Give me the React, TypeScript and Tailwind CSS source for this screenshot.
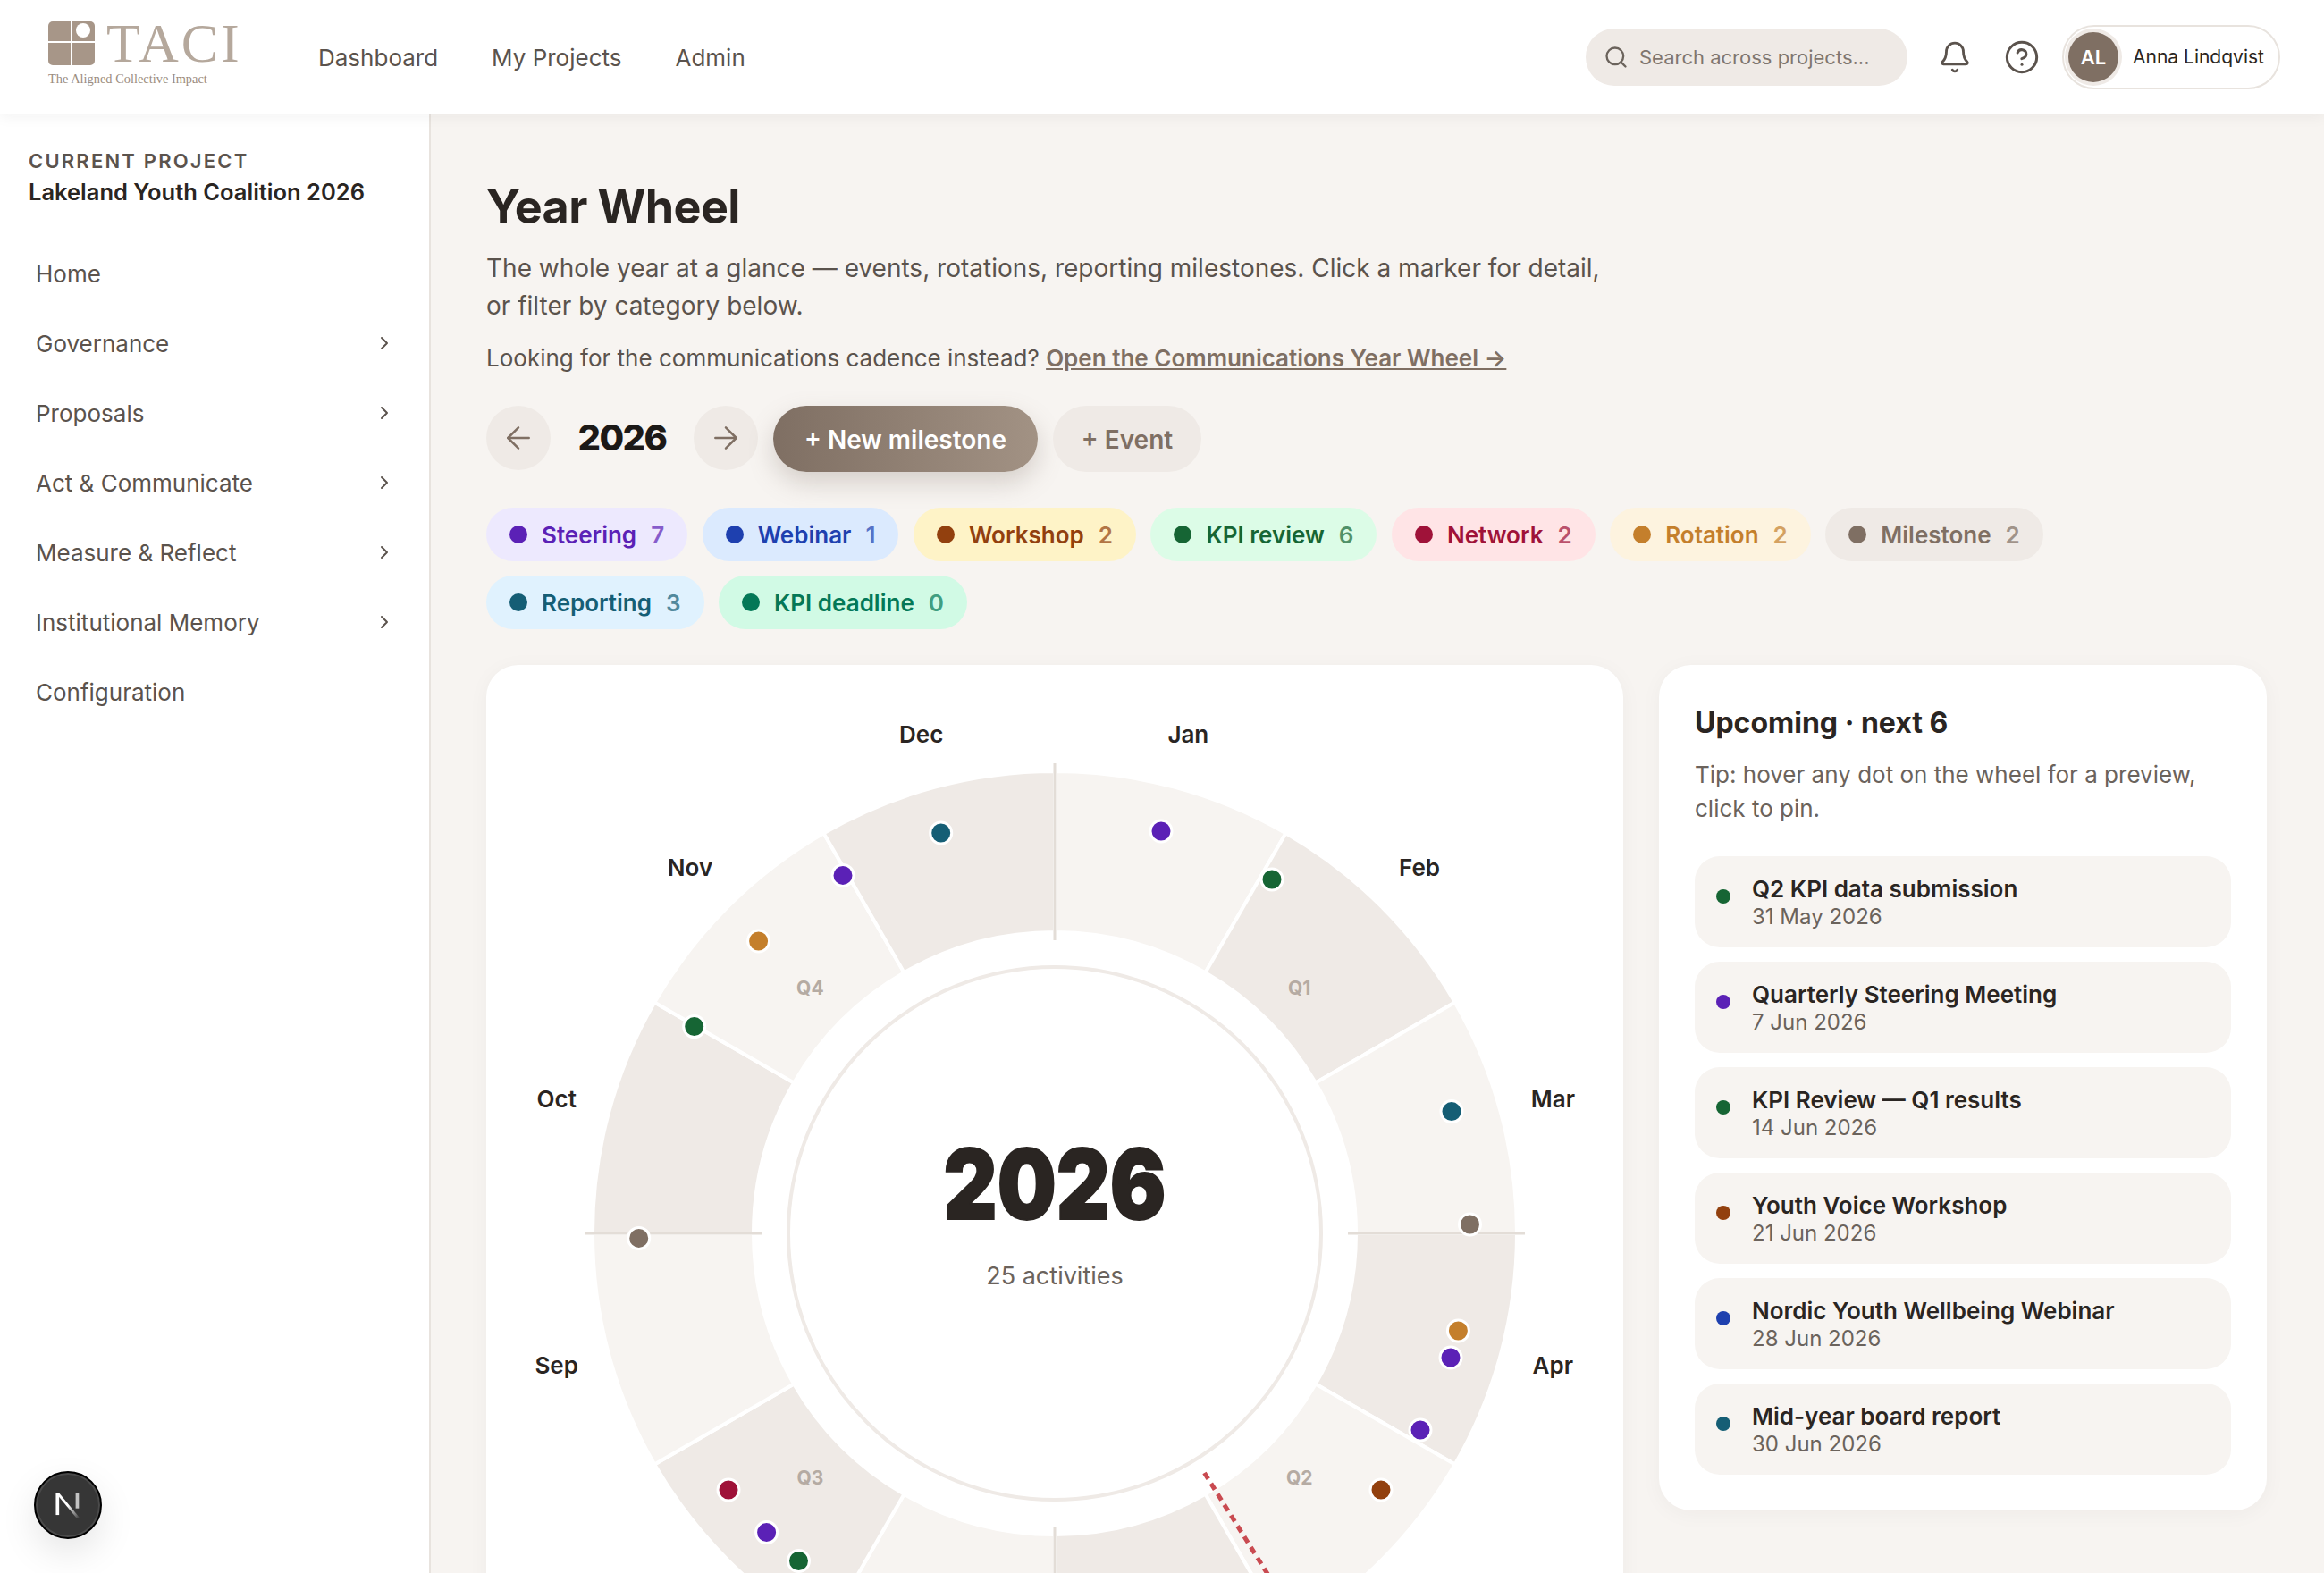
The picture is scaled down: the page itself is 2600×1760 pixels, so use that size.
import { ArrowLeft, ArrowRight, Bell, ChevronRight, CircleHelp, Search } from 'lucide-react'

const navItems = [
  { label: 'Home' },
  { label: 'Governance', more: true },
  { label: 'Proposals', more: true },
  { label: 'Act & Communicate', more: true },
  { label: 'Measure & Reflect', more: true },
  { label: 'Institutional Memory', more: true },
  { label: 'Configuration' },
]

const chips = [
  { label: 'Steering', count: 7, bg: 'bg-[#ede9fe]', text: 'text-[#5b21b6]', dot: 'bg-[#5b21b6]' },
  { label: 'Webinar', count: 1, bg: 'bg-[#dbeafe]', text: 'text-[#1e40af]', dot: 'bg-[#1e40af]' },
  { label: 'Workshop', count: 2, bg: 'bg-[#fef3c7]', text: 'text-[#92400e]', dot: 'bg-[#92400e]' },
  { label: 'KPI review', count: 6, bg: 'bg-[#dcfce7]', text: 'text-[#166534]', dot: 'bg-[#166534]' },
  { label: 'Network', count: 2, bg: 'bg-[#ffe4e6]', text: 'text-[#9f1239]', dot: 'bg-[#9f1239]' },
  { label: 'Rotation', count: 2, bg: 'bg-[#fdf3df]', text: 'text-[#c47f2c]', dot: 'bg-[#c47f2c]' },
  { label: 'Milestone', count: 2, bg: 'bg-[#efeae6]', text: 'text-[#7f6f63]', dot: 'bg-[#7f6f63]' },
  { label: 'Reporting', count: 3, bg: 'bg-[#e0f2fe]', text: 'text-[#155e75]', dot: 'bg-[#155e75]' },
  { label: 'KPI deadline', count: 0, bg: 'bg-[#d1fae5]', text: 'text-[#047857]', dot: 'bg-[#047857]' },
]

const upcoming = [
  { title: 'Q2 KPI data submission', date: '31 May 2026', dot: 'bg-[#166534]' },
  { title: 'Quarterly Steering Meeting', date: '7 Jun 2026', dot: 'bg-[#5b21b6]' },
  { title: 'KPI Review — Q1 results', date: '14 Jun 2026', dot: 'bg-[#166534]' },
  { title: 'Youth Voice Workshop', date: '21 Jun 2026', dot: 'bg-[#92400e]' },
  { title: 'Nordic Youth Wellbeing Webinar', date: '28 Jun 2026', dot: 'bg-[#1e40af]' },
  { title: 'Mid-year board report', date: '30 Jun 2026', dot: 'bg-[#155e75]' },
]

const months = ['Jan', 'Feb', 'Mar', 'Apr', 'May', 'Jun', 'Jul', 'Aug', 'Sep', 'Oct', 'Nov', 'Dec']

const markers = [
  [1052.7, 932, '#155e75'], [1299, 930, '#5b21b6'], [1423, 984, '#166534'], [943, 979.4, '#5b21b6'],
  [848.6, 1053, '#c47f2c'], [776.7, 1148.6, '#166534'], [1624, 1243.6, '#155e75'], [1644.5, 1370, '#7f6f63'],
  [714.7, 1385.4, '#7f6f63'], [1631.4, 1489, '#c47f2c'], [1623, 1519, '#5b21b6'], [1589, 1600, '#5b21b6'],
  [1545, 1667, '#92400e'], [815, 1667, '#9f1239'], [857.6, 1714.6, '#5b21b6'], [893.5, 1746.5, '#166534'],
] as const

const C = 636
const polar = (r: number, deg: number) => {
  const a = (deg * Math.PI) / 180
  return [C + r * Math.sin(a), C - r * Math.cos(a)]
}

function wedge(i: number) {
  const [x1, y1] = polar(517, i * 30)
  const [x2, y2] = polar(517, i * 30 + 30)
  const [x3, y3] = polar(337, i * 30 + 30)
  const [x4, y4] = polar(337, i * 30)
  return `M${x1} ${y1}A517 517 0 0 1 ${x2} ${y2}L${x3} ${y3}A337 337 0 0 0 ${x4} ${y4}Z`
}

function Wheel() {
  const [tx1, ty1] = polar(316, 148)
  const [tx2, ty2] = polar(530, 148)
  return (
    <svg viewBox="0 0 1272 1272" className="block h-[1272px] w-[1272px] font-[Inter,sans-serif]">
      {months.map((m, i) => (
        <path key={m} d={wedge(i)} fill={i % 2 ? '#efeae6' : '#f7f4f1'} stroke="#ffffff" strokeWidth="4" />
      ))}
      {[0, 90, 180, 270].map(deg => {
        const [x1, y1] = polar(328, deg)
        const [x2, y2] = polar(526, deg)
        return <line key={deg} x1={x1} y1={y1} x2={x2} y2={y2} stroke="#e3ddd7" strokeWidth="3" />
      })}
      <circle cx={C} cy={C} r="298" fill="#ffffff" stroke="#efeae6" strokeWidth="4" />
      <line x1={tx1} y1={ty1} x2={tx2} y2={ty2} stroke="#c94a50" strokeWidth="5" strokeDasharray="8 6" />
      {months.map((m, i) => {
        const [x, y] = polar(577, i * 30 + 15)
        return <text key={m} x={x} y={y + 8} textAnchor="middle" fontSize="26" fontWeight="600" fill="#2a2522">{m}</text>
      })}
      {[['Q1', 45], ['Q2', 135], ['Q3', 225], ['Q4', 315]].map(([q, deg]) => {
        const [x, y] = polar(387, deg as number)
        return <text key={q} x={x} y={y + 7} textAnchor="middle" fontSize="21" fontWeight="700" fill="#b5aba3">{q}</text>
      })}
      {markers.map(([x, y, color], i) => (
        <circle key={i} cx={x - 544} cy={y - 744} r="12" fill={color} stroke="#ffffff" strokeWidth="3" />
      ))}
      <text transform={`translate(${C} 620) scale(0.86 1)`} textAnchor="middle" fontSize="108" fontWeight="900" fill="#2a2522" stroke="#2a2522" strokeWidth="2">2026</text>
      <text x={C} y={693} textAnchor="middle" fontSize="27" fill="#6b635c">25 activities</text>
    </svg>
  )
}

function Logo() {
  return (
    <div className="mb-[7px] flex w-[230px] flex-col font-['Liberation_Serif',serif]">
      <div className="flex h-[49px] items-center gap-[13px]">
        <svg viewBox="0 0 52 49" className="h-[49px] w-[52px]">
          <path d="M5 0H25V22H0V5A5 5 0 0 1 5 0Z" fill="#a79688" />
          <path d="M27 0H47A5 5 0 0 1 52 5V22H27Z" fill="#a79688" />
          <path d="M0 24H25V49H5A5 5 0 0 1 0 44Z" fill="#a79688" />
          <path d="M27 24H52V44A5 5 0 0 1 47 49H27Z" fill="#a79688" />
          <circle cx="39" cy="10" r="8" fill="#ffffff" />
        </svg>
        <span className="text-[62px] leading-[49px] tracking-[3px] text-[#b5a89c]">TACI</span>
      </div>
      <span className="mt-[6px] text-[14.4px] leading-[18px] text-[#9c8d80]">The Aligned Collective Impact</span>
    </div>
  )
}

export default function App() {
  return (
    <div className="flex h-[1760px] w-[2600px] flex-col overflow-hidden bg-[#f7f4f1] font-[Inter,sans-serif] text-[#2a2522]">
      <header className="relative z-10 flex h-[128px] shrink-0 items-center bg-white pr-[49px] pl-[54px] shadow-[0_2px_16px_rgba(42,37,34,0.06)]">
        <Logo />
        <nav className="ml-[72px] flex gap-[60px] text-[26px] text-[#5b534d]">
          <span>Dashboard</span>
          <span>My Projects</span>
          <span>Admin</span>
        </nav>
        <div className="ml-auto flex h-[64px] w-[360px] items-center gap-[12px] rounded-full bg-[#efeae6] px-[20px] text-[22px] whitespace-nowrap text-[#7f766f]">
          <Search size={28} strokeWidth={2} className="shrink-0 text-[#6b635c]" />
          <span>Search across projects...</span>
        </div>
        <Bell size={38} strokeWidth={1.8} className="ml-[34px] text-[#5b534d]" />
        <CircleHelp size={40} strokeWidth={1.8} className="ml-[36px] text-[#5b534d]" />
        <div className="ml-[25px] flex h-[72px] w-[244px] items-center gap-[16px] rounded-full border-2 border-[#e8e3de] pl-[5px] whitespace-nowrap">
          <div className="flex h-[56px] w-[56px] shrink-0 items-center justify-center rounded-full bg-[#7f6f63] text-[22px] font-semibold text-white ring-4 ring-[#efeae6]">AL</div>
          <span className="text-[21px] text-[#2a2522]">Anna Lindqvist</span>
        </div>
      </header>

      <div className="flex min-h-0 flex-1">
        <aside className="relative w-[482px] shrink-0 border-r-2 border-[#e8e3de] bg-white">
          <div className="px-[32px] pt-[38px]">
            <p className="text-[22px] leading-[28px] font-semibold tracking-[2.2px] text-[#5b534d]">CURRENT PROJECT</p>
            <p className="mt-[3px] text-[25.5px] leading-[36px] font-semibold">Lakeland Youth Coalition 2026</p>
          </div>
          <nav className="mt-[34px] flex flex-col pr-[38px] pl-[40px] text-[26px] text-[#5b534d]">
            {navItems.map(item => (
              <div key={item.label} className="flex h-[78px] items-center justify-between">
                <span>{item.label}</span>
                {item.more && <ChevronRight size={24} strokeWidth={2} />}
              </div>
            ))}
          </nav>
          <div className="absolute top-[1518px] left-[38px] flex h-[76px] w-[76px] items-center justify-center rounded-full border-2 border-black bg-[#363636] shadow-[0_16px_40px_rgba(0,0,0,0.1)] ring-2 ring-[#4a4a4a] ring-inset">
            <svg viewBox="0 0 26 26" className="h-[32px] w-[32px]">
              <defs>
                <linearGradient id="nfade" x1="0" y1="0" x2="1" y2="1">
                  <stop offset="0.5" stopColor="#ffffff" />
                  <stop offset="1" stopColor="#ffffff" stopOpacity="0" />
                </linearGradient>
              </defs>
              <rect x="2" y="2" width="3" height="20" fill="#ffffff" />
              <path d="M2 2H5L24 25H21Z" fill="url(#nfade)" />
              <rect x="20" y="2" width="3" height="14" fill="#ffffff" opacity="0.7" />
            </svg>
          </div>
        </aside>

        <main className="min-w-0 flex-1 pt-[76px] pr-[64px] pl-[62px]">
          <h1 className="text-[52px] leading-[56px] font-bold tracking-[-0.6px]">Year Wheel</h1>
          <p className="mt-[19px] w-[1280px] text-[28px] leading-[42px] text-[#5b534d]">
            The whole year at a glance — events, rotations, reporting milestones. Click a marker for detail,<br />or filter by category below.
          </p>
          <p className="mt-[19px] text-[26px] leading-[38px] text-[#5b534d]">
            Looking for the communications cadence instead?{' '}
            <a className="font-semibold text-[#7f6f63] underline">Open the Communications Year Wheel →</a>
          </p>

          <div className="mt-[34px] flex items-start">
            <div className="flex h-[72px] w-[72px] items-center justify-center rounded-full bg-[#efeae6] text-[#7f6f63]"><ArrowLeft size={40} strokeWidth={1.5} /></div>
            <span className="w-[160px] text-center text-[40px] leading-[72px] font-extrabold tracking-[-1.5px] text-[#1c1917]">2026</span>
            <div className="flex h-[72px] w-[72px] items-center justify-center rounded-full bg-[#efeae6] text-[#7f6f63]"><ArrowRight size={40} strokeWidth={1.5} /></div>
            <button className="ml-[17px] h-[74px] w-[296px] rounded-full bg-linear-to-r from-[#7f6f63] to-[#a29284] pt-[1px] text-[28px] font-semibold text-white shadow-[0_12px_28px_rgba(127,111,99,0.28)]">+ New milestone</button>
            <button className="ml-[17px] h-[74px] w-[166px] rounded-full bg-[#efeae6] pt-[1px] text-[28px] font-semibold text-[#7f6f63]">+ Event</button>
          </div>

          <div className="mt-[40px] flex w-[1800px] flex-wrap gap-x-[16.5px] gap-y-[16px]">
            {chips.map(chip => (
              <div key={chip.label} className={`flex h-[60px] items-center rounded-full px-[26px] text-[26px] font-semibold ${chip.bg} ${chip.text}`}>
                <span className={`mr-[16px] h-[20px] w-[20px] rounded-full ${chip.dot}`} />
                {chip.label}
                <span className="ml-[16px] opacity-70">{chip.count}</span>
              </div>
            ))}
          </div>

          <div className="mt-[40px] flex items-start gap-[40px]">
            <section className="w-[1272px] shrink-0 rounded-[36px] bg-white shadow-[0_4px_24px_rgba(42,37,34,0.04)]">
              <Wheel />
            </section>
            <section className="w-[680px] shrink-0 rounded-[36px] bg-white p-[40px] shadow-[0_4px_24px_rgba(42,37,34,0.04)]">
              <h2 className="text-[32px] leading-[50px] font-bold">Upcoming · next 6</h2>
              <p className="mt-[14px] text-[26px] leading-[38px] text-[#6b635c]">Tip: hover any dot on the wheel for a preview, click to pin.</p>
              <div className="mt-[34px] flex flex-col gap-[16px]">
                {upcoming.map(row => (
                  <div key={row.title} className="flex h-[102px] items-center rounded-[28px] bg-[#f7f4f1] px-[24px]">
                    <span className={`mr-[24px] h-[16px] w-[16px] shrink-0 -translate-y-[6px] rounded-full ${row.dot}`} />
                    <div className="pt-[2px]">
                      <p className="text-[26px] leading-[31px] font-semibold">{row.title}</p>
                      <p className="text-[24px] leading-[31px] text-[#6b635c]">{row.date}</p>
                    </div>
                  </div>
                ))}
              </div>
            </section>
          </div>
        </main>
      </div>
    </div>
  )
}
